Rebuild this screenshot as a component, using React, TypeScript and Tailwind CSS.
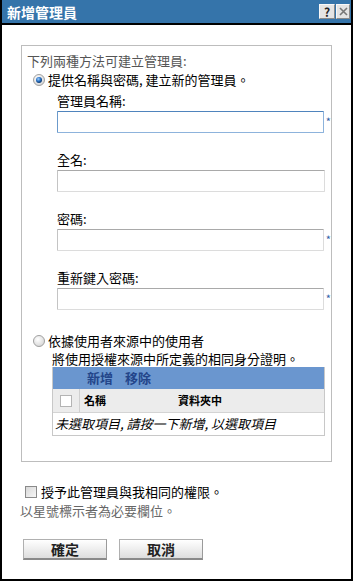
import React from "react";

const font = { fontFamily: '"Noto Sans CJK TC", "Noto Sans", sans-serif' };

function Radio({ checked }: { checked?: boolean }) {
  return (
    <svg width="12" height="12" viewBox="0 0 12 12" className="shrink-0">
      <defs>
        <radialGradient id="rg-off" cx="0.4" cy="0.35" r="0.7">
          <stop offset="0" stopColor="#ffffff" />
          <stop offset="1" stopColor="#d4d4d4" />
        </radialGradient>
        <radialGradient id="rg-on" cx="0.4" cy="0.35" r="0.6">
          <stop offset="0" stopColor="#9fd0ff" />
          <stop offset="0.6" stopColor="#2a72c4" />
          <stop offset="1" stopColor="#0f3f7a" />
        </radialGradient>
      </defs>
      <circle cx="6" cy="6" r="5.5" fill="url(#rg-off)" stroke="#a0a0a0" />
      {checked && <circle cx="6" cy="6" r="3" fill="url(#rg-on)" />}
    </svg>
  );
}

function Field({ label, required, focused }: { label: string; required?: boolean; focused?: boolean }) {
  return (
    <div className="ml-[30px]">
      <div className="h-4 leading-4 text-[13px] text-black">{label}</div>
      <div className="flex items-start mt-[2px]">
        <div
          className={
            focused
              ? "w-[268px] h-[22px] bg-white border border-[#8db3dc] border-t-[#4f84bd] border-l-[#6b9acb] rounded-[1px]"
              : "w-[268px] h-[22px] bg-white border border-[#dcdcdc] border-t-[#a9a9a9] border-l-[#c4c4c4] rounded-[1px]"
          }
        />
        {required && <span className="ml-[2px] mt-[4px] text-[11px] leading-3 text-[#2f5fa8]">*</span>}
      </div>
    </div>
  );
}

export default function App() {
  return (
    <div style={font} className="w-[353px] h-[581px] bg-white border-2 border-t-0 border-black flex flex-col">
      {/* title bar */}
      <div className="h-[25px] bg-[#3574aa] border-b-2 border-black flex items-center justify-between pl-[5px] pr-[1px] shrink-0">
        <span className="text-white font-bold text-[14px] leading-4">新增管理員</span>
        <div className="flex gap-[1px]">
          <div className="w-[16px] h-[15px] bg-[#e4e4e4] border border-[#f8f8f8] border-b-[#8a8a8a] border-r-[#8a8a8a] flex items-center justify-center text-[12px] font-bold leading-none text-[#222]">?</div>
          <div className="w-[14px] h-[15px] bg-[#e4e4e4] border border-[#f8f8f8] border-b-[#8a8a8a] border-r-[#8a8a8a] flex items-center justify-center">
            <svg width="9" height="9" viewBox="0 0 9 9">
              <path d="M1 1L8 8M8 1L1 8" stroke="#777" strokeWidth="1.6" />
            </svg>
          </div>
        </div>
      </div>

      {/* options box */}
      <div className="ml-[19px] mt-[20px] w-[311px] h-[417px] border border-[#bdbdbd] pl-[5px] pt-[7px]">
        <div className="h-4 leading-4 text-[13px] text-[#555]">下列兩種方法可建立管理員:</div>
        <div className="flex items-center gap-[3px] mt-[3px] ml-[6px] h-4">
          <Radio checked />
          <span className="text-[13px] leading-4 text-black">提供名稱與密碼, 建立新的管理員。</span>
        </div>
        <div className="mt-[5px]">
          <Field label="管理員名稱:" required focused />
        </div>
        <div className="mt-[19px]">
          <Field label="全名:" />
        </div>
        <div className="mt-[19px]">
          <Field label="密碼:" required />
        </div>
        <div className="mt-[19px]">
          <Field label="重新鍵入密碼:" required />
        </div>

        <div className="flex items-center gap-[3px] mt-[23px] ml-[6px] h-4">
          <Radio />
          <span className="text-[13px] leading-4 text-black">依據使用者來源中的使用者</span>
        </div>
        <div className="ml-[25px] mt-[2px] h-4 leading-4 text-[13px] text-black">將使用授權來源中所定義的相同身分證明。</div>

        <div className="ml-[25px] w-[273px] border border-[#c8c8c8] border-t-0">
          <div className="h-[22px] bg-[#6a96cf] flex items-center gap-[12px] pl-[34px] text-[13px] font-bold text-[#23458a]">
            <span>新增</span>
            <span>移除</span>
          </div>
          <div className="h-[24px] bg-[#ececec] flex items-center text-[11px] font-bold text-black border-b border-[#d4d4d4]">
            <div className="w-[27px] h-full flex items-center justify-center border-r border-[#d0d0d0]">
              <div className="w-[12px] h-[12px] bg-white border border-[#b4b4b4]" />
            </div>
            <span className="ml-[4px] w-[94px]">名稱</span>
            <span>資料夾中</span>
          </div>
          <div className="h-[22px] flex items-center pl-[2px] text-[13px] italic text-black">未選取項目, 請按一下新增, 以選取項目</div>
        </div>
      </div>

      {/* footer */}
      <div className="flex items-center gap-[4px] ml-[23px] mt-[22px] h-4">
        <div className="w-[12px] h-[12px] border border-[#8a8a8a] bg-gradient-to-br from-[#d8d8d8] to-[#f6f6f6]" />
        <span className="text-[13px] leading-4 text-black">授予此管理員與我相同的權限。</span>
      </div>
      <div className="ml-[18px] mt-[3px] h-4 leading-4 text-[13px] text-[#666]">以星號標示者為必要欄位。</div>

      <div className="flex gap-[12px] ml-[21px] mt-[20px]">
        <button className="w-[84px] h-[21px] border border-[#b0b0b0] border-b-2 border-b-[#8a8a8a] border-r-[#9a9a9a] bg-gradient-to-b from-white to-[#dedede] text-[14px] font-bold leading-none text-[#222]">確定</button>
        <button className="w-[84px] h-[21px] border border-[#b0b0b0] border-b-2 border-b-[#8a8a8a] border-r-[#9a9a9a] bg-gradient-to-b from-white to-[#dedede] text-[14px] font-bold leading-none text-[#222]">取消</button>
      </div>
    </div>
  );
}
